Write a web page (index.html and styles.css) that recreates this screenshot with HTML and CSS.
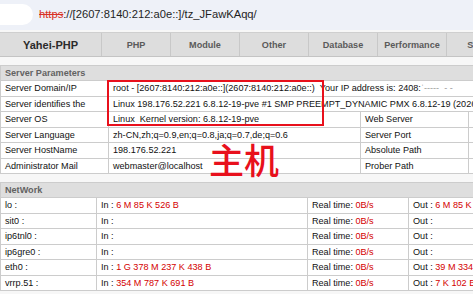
FILE: index.html
```html
<!DOCTYPE html>
<html>

<head>
    <meta charset="utf-8">
    <title>Yahei-PHP</title>
    <link rel="stylesheet" href="styles.css">
</head>

<body>
    <div class="address-bar">
        <span class="address-pill"></span>
        <span class="address-text"><span class="insecure">https</span>://[2607:8140:212:a0e::]/tz_JFawKAqq/</span>
    </div>

    <div class="nav">
        <div class="nav-item nav-title">Yahei-PHP</div>
        <div class="nav-item">PHP</div>
        <div class="nav-item">Module</div>
        <div class="nav-item">Other</div>
        <div class="nav-item">Database</div>
        <div class="nav-item">Performance</div>
        <div class="nav-item">Speed</div>
    </div>

    <div class="params">
        <table class="grid server-table">
            <colgroup>
                <col class="col-label">
                <col class="col-value">
                <col class="col-label">
                <col class="col-value">
            </colgroup>
            <tr>
                <th colspan="4">Server Parameters</th>
            </tr>
            <tr>
                <td>Server Domain/IP</td>
                <td colspan="3">root - [2607:8140:212:a0e::](2607:8140:212:a0e::)&nbsp;&nbsp;Your IP address is: 2408:<span class="masked">ˈ-----&nbsp; - -</span></td>
            </tr>
            <tr>
                <td>Server identifies the</td>
                <td colspan="3">Linux 198.176.52.221 6.8.12-19-pve #1 SMP PREEMPT_DYNAMIC PMX 6.8.12-19 (2026-01-09T12:13Z) x86_64</td>
            </tr>
            <tr>
                <td>Server OS</td>
                <td>Linux&nbsp;&nbsp;Kernel version: 6.8.12-19-pve</td>
                <td>Web Server</td>
                <td>nginx</td>
            </tr>
            <tr>
                <td>Server Language</td>
                <td>zh-CN,zh;q=0.9,en;q=0.8,ja;q=0.7,de;q=0.6</td>
                <td>Server Port</td>
                <td>443</td>
            </tr>
            <tr>
                <td>Server HostName</td>
                <td>198.176.52.221</td>
                <td>Absolute Path</td>
                <td>/www/wwwroot</td>
            </tr>
            <tr>
                <td>Administrator Mail</td>
                <td>webmaster@localhost</td>
                <td>Prober Path</td>
                <td>/www/wwwroot/tz.php</td>
            </tr>
        </table>

        <!-- annotation drawn over the screenshot -->
        <div class="mark-box"></div>
        <div class="mark-label">主机</div>
    </div>

    <table class="grid net-table">
        <colgroup>
            <col class="col-iface">
            <col class="col-in">
            <col class="col-rate">
            <col class="col-out">
        </colgroup>
        <tr>
            <th colspan="4">NetWork</th>
        </tr>
        <tr>
            <td>lo :</td>
            <td>In : <span class="num">6 M 85 K 526 B</span></td>
            <td>Real time: <span class="num">0B/s</span></td>
            <td>Out : <span class="num">6 M 85 K 526 B</span></td>
        </tr>
        <tr>
            <td>sit0 :</td>
            <td>In : </td>
            <td>Real time: <span class="num">0B/s</span></td>
            <td>Out : </td>
        </tr>
        <tr>
            <td>ip6tnl0 :</td>
            <td>In : </td>
            <td>Real time: <span class="num">0B/s</span></td>
            <td>Out : </td>
        </tr>
        <tr>
            <td>ip6gre0 :</td>
            <td>In : </td>
            <td>Real time: <span class="num">0B/s</span></td>
            <td>Out : </td>
        </tr>
        <tr>
            <td>eth0 :</td>
            <td>In : <span class="num">1 G 378 M 237 K 438 B</span></td>
            <td>Real time: <span class="num">0B/s</span></td>
            <td>Out : <span class="num">39 M 334 K 120 B</span></td>
        </tr>
        <tr>
            <td>vrrp.51 :</td>
            <td>In : <span class="num">354 M 787 K 691 B</span></td>
            <td>Real time: <span class="num">0B/s</span></td>
            <td>Out : <span class="num">7 K 102 B</span></td>
        </tr>
    </table>
</body>
</html>
```

FILE: styles.css
```css
* {
    box-sizing: border-box;
}

html, body {
    overflow: hidden;
}

body {
    margin: 0;
    background-color: #f7f7f7;
    font-family: "Liberation Sans", Arial, sans-serif;
    font-size: 9.1px;
    color: #111111;
}

/* browser address bar */
.address-bar {
    display: flex;
    align-items: center;
    height: 30px;
    margin-bottom: 2px;
    background-color: #eef1f8;
}

.address-pill {
    width: 33px;
    height: 21px;
    margin-top: -2px;
    background-color: #ffffff;
    border-radius: 0 11px 11px 0;
}

.address-text {
    margin-left: 6px;
    margin-top: -2px;
    font-size: 11.2px;
    color: #1f1f1f;
}

.insecure {
    color: #d93025;
    text-decoration: line-through;
}

/* top menu */
.nav {
    display: flex;
    height: 25px;
    margin-bottom: 8px;
    background-color: #dddddd;
    border-top: 1px solid #cfcfcf;
    border-bottom: 1px solid #c4c4c4;
}

.nav-item {
    flex: none;
    display: flex;
    align-items: center;
    justify-content: center;
    width: 69px;
    border-right: 1px solid #c8c8c8;
    font-weight: bold;
    color: #5a5a5a;
}

.nav-title {
    width: 102px;
    font-size: 11px;
    color: #2b2b2b;
}

/* tables */
.params {
    position: relative;
}

.grid {
    width: 720px;
    margin-bottom: 8px;
    table-layout: fixed;
    border-collapse: collapse;
    background-color: #ffffff;
}

.grid th, .grid td {
    padding: 2px 4px;
    line-height: 10.5px;
    border: 1px solid #cccccc;
    text-align: left;
    white-space: nowrap;
    overflow: hidden;
}

.grid th {
    line-height: 10px;
    background-color: #dedede;
    color: #626262;
    font-weight: bold;
}

.server-table .col-label {
    width: 108px;
}

.server-table .col-value {
    width: 252px;
}

.net-table .col-iface {
    width: 96px;
}

.net-table .col-in {
    width: 211px;
}

.net-table .col-rate {
    width: 101px;
}

.net-table .col-out {
    width: 312px;
}

.num {
    color: #d40000;
}

.masked {
    color: #9a9a9a;
}

/* red annotation */
.mark-box {
    position: absolute;
    left: 107px;
    top: 15px;
    width: 217px;
    height: 46px;
    border: 2px solid #e8101c;
}

.mark-label {
    position: absolute;
    left: 209px;
    top: 76px;
    font-family: "Noto Sans CJK SC", sans-serif;
    font-size: 35px;
    font-weight: 500;
    line-height: 35px;
    color: #e8101c;
}
```
